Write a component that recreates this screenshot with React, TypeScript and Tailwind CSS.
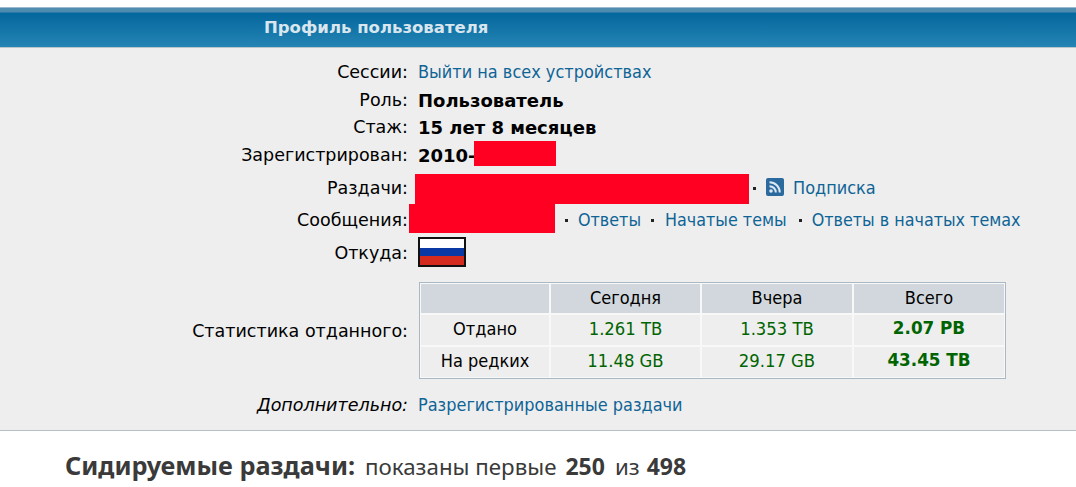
const base = "font-['DejaVu_Sans_Condensed','DejaVu_Sans',sans-serif]";
const red = "bg-[#ff0022] shrink-0";

function Row({ label, h, children, italic, labelClass = "" }: { label: string; h: string; children: React.ReactNode; italic?: boolean; labelClass?: string }) {
  return (
    <div className={`flex items-center ${h}`}>
      <div className={`w-[408px] shrink-0 text-right font-['DejaVu_Sans',sans-serif] text-[17.5px] text-black ${italic ? "italic" : ""} ${labelClass}`}>{label}</div>
      <div className="ml-[10px] flex min-w-0 flex-1 items-center">{children}</div>
    </div>
  );
}

function A({ children, size = "text-[17.95px]" }: { children: React.ReactNode; size?: string }) {
  return <a className={`whitespace-nowrap ${size} text-[#0f6496]`}>{children}</a>;
}

function B({ children }: { children: React.ReactNode }) {
  return <b className="whitespace-nowrap font-['DejaVu_Sans',sans-serif] text-[18px] text-black">{children}</b>;
}

function Dot({ className }: { className: string }) {
  return <span className={`h-[3px] w-[3px] shrink-0 bg-[#222] ${className}`} />;
}

function Rss() {
  return (
    <svg width="18" height="18" viewBox="0 0 18 18" className="mb-[2px] ml-[10px] shrink-0">
      <rect width="18" height="18" rx="2" fill="#2a6a9e" />
      <circle cx="5" cy="13" r="1.8" fill="#dce8f2" />
      <path d="M3.5 8.2a6.3 6.3 0 0 1 6.3 6.3" fill="none" stroke="#dce8f2" strokeWidth="2" />
      <path d="M3.5 4.2a10.3 10.3 0 0 1 10.3 10.3" fill="none" stroke="#dce8f2" strokeWidth="2" />
    </svg>
  );
}

function Flag() {
  return (
    <div className="mt-[2px] flex h-[30px] w-[48px] flex-col border-2 border-[#111]">
      <div className="flex-1 bg-white" />
      <div className="flex-1 bg-[#0a39a6]" />
      <div className="flex-1 bg-[#d52b1e]" />
    </div>
  );
}

const th = "bg-[#d1d7dc] pb-[2px] font-normal text-black";
const td = "bg-[#eeeeee] pb-[2px] text-center";
const green = "text-[#006400] text-[18.3px]";
const total = "font-['DejaVu_Sans',sans-serif] text-[#006400] text-[16.8px] font-bold";

function Stats() {
  return (
    <table className="w-[587px] table-fixed border-separate border-spacing-0 border border-[#a9b8c2] text-center text-[18px] [&_td]:border [&_td]:border-[#f8f8f8] [&_th]:border [&_th]:border-[#f8f8f8]">
      <colgroup>
        <col className="w-[130px]" />
        <col className="w-[151px]" />
        <col className="w-[152px]" />
        <col />
      </colgroup>
      <tbody>
        <tr className="h-[30px]">
          <th className={th}></th>
          <th className={th}>Сегодня</th>
          <th className={th}>Вчера</th>
          <th className={th}>Всего</th>
        </tr>
        <tr className="h-[32px]">
          <td className={`${td} text-black`}>Отдано</td>
          <td className={`${td} ${green}`}>1.261 TB</td>
          <td className={`${td} ${green}`}>1.353 TB</td>
          <td className={`${td} ${total}`}>2.07 PB</td>
        </tr>
        <tr className="h-[32px]">
          <td className={`${td} text-black`}>На редких</td>
          <td className={`${td} ${green}`}>11.48 GB</td>
          <td className={`${td} ${green}`}>29.17 GB</td>
          <td className={`${td} ${total}`}>43.45 TB</td>
        </tr>
      </tbody>
    </table>
  );
}

export default function App() {
  const small = "text-[17.75px]";
  return (
    <div className={`h-[487px] w-[1076px] overflow-hidden bg-white ${base}`}>
      <div className="h-[7px]" />
      <div className="flex h-[41px] items-center border-b border-[#b9c4cb] border-t-[1px] border-t-[#9ab9cc] bg-[linear-gradient(to_bottom,#4f8cb0_0,#4f8cb0_4px,#04679d_5px,#2484b4_100%)] pl-[264px] pt-[2px]">
        <span className="font-['DejaVu_Sans',sans-serif] text-[16.5px] font-bold text-[#d9e6ee]">Профиль пользователя</span>
      </div>
      <div className="h-[383px] border-b border-[#b3c0c8] bg-[#eeeeee] pt-[10px]">
        <Row label="Сессии:" h="h-[28px]"><A>Выйти на всех устройствах</A></Row>
        <Row label="Роль:" h="h-[28px]"><B>Пользователь</B></Row>
        <Row label="Стаж:" h="h-[27px]"><B>15 лет 8 месяцев</B></Row>
        <Row label="Зарегистрирован:" h="h-[28px]">
          <B>2010-</B>
          <span className={`-ml-[2px] mb-[3px] h-[25px] w-[82px] ${red}`} />
        </Row>
        <Row label="Раздачи:" h="h-[38px]">
          <span className={`-ml-[3px] mt-[2px] h-[30px] w-[334px] ${red}`} />
          <Dot className="ml-[4px]" />
          <Rss />
          <span className="ml-[9px]"><A>Подписка</A></span>
        </Row>
        <Row label="Сообщения:" h="h-[26px]">
          <span className={`-ml-[9px] mb-[3px] h-[29px] w-[146px] ${red}`} />
          <Dot className="ml-[10px]" />
          <span className="ml-[10px]"><A size={small}>Ответы</A></span>
          <Dot className="ml-[10px]" />
          <span className="ml-[11px]"><A size={small}>Начатые темы</A></span>
          <Dot className="ml-[12px]" />
          <span className="ml-[10px]"><A size={small}>Ответы в начатых темах</A></span>
        </Row>
        <Row label="Откуда:" h="h-[36px]" labelClass="pt-[4px]"><Flag /></Row>
        <div className="h-[13px]" />
        <Row label="Статистика отданного:" h="h-[96px]" labelClass="pt-[2px]"><div className="ml-[1px]"><Stats /></div></Row>
        <div className="h-[13px]" />
        <Row label="Дополнительно:" h="h-[28px]" italic><A>Разрегистрированные раздачи</A></Row>
      </div>
      <div className="whitespace-nowrap pl-[65px] pt-[18px] font-['Noto_Sans',sans-serif] text-[22.3px] leading-[32px] text-[#3a3a3a]">
        <b className="text-[25.3px]">Сидируемые раздачи:</b>
        <span className="ml-[10px]">показаны первые</span>
        <b className="ml-[9px] text-[23px]">250</b>
        <span className="ml-[10px]">из</span>
        <b className="ml-[7px] text-[23px]">498</b>
      </div>
    </div>
  );
}
